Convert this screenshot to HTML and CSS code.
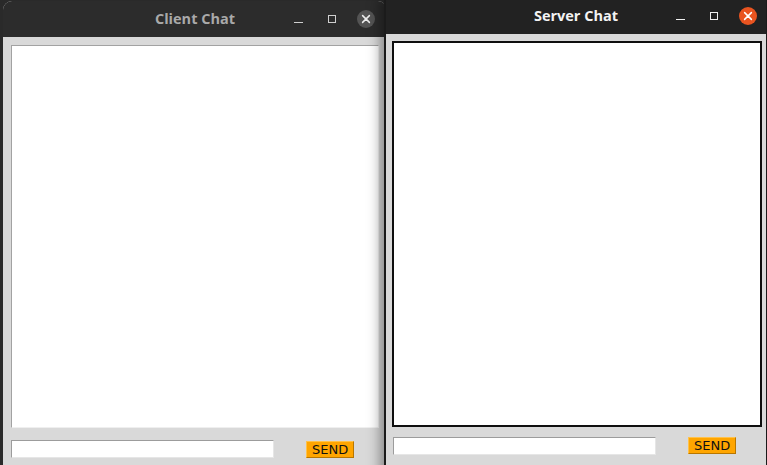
FILE: index.html
```html
<!DOCTYPE html>
<html>
<head>
<meta charset="utf-8">
<title>Chat</title>
<link rel="stylesheet" href="styles.css">
</head>
<body>
<div class="desktop">
  <section class="win win-client">
    <header class="titlebar">
      <span class="spacer"></span>
      <h1 class="title">Client Chat</h1>
      <div class="controls">
        <span class="ctl"><span class="min"></span></span>
        <span class="ctl"><span class="max"></span></span>
        <span class="ctl">
          <svg class="close" width="18" height="18" viewBox="0 0 18 18">
            <circle cx="9" cy="9" r="9" class="close-bg"/>
            <path d="M5.6 5.6 L12.4 12.4 M12.4 5.6 L5.6 12.4" class="close-x"/>
          </svg>
        </span>
      </div>
    </header>
    <div class="body">
      <div class="log log-plain"></div>
      <div class="entry-row">
        <input class="entry" type="text">
        <button class="send">SEND</button>
      </div>
    </div>
  </section>

  <section class="win win-server">
    <header class="titlebar">
      <span class="spacer"></span>
      <h1 class="title">Server Chat</h1>
      <div class="controls">
        <span class="ctl"><span class="min"></span></span>
        <span class="ctl"><span class="max"></span></span>
        <span class="ctl">
          <svg class="close" width="18" height="18" viewBox="0 0 18 18">
            <circle cx="9" cy="9" r="9" class="close-bg"/>
            <path d="M5.6 5.6 L12.4 12.4 M12.4 5.6 L5.6 12.4" class="close-x"/>
          </svg>
        </span>
      </div>
    </header>
    <div class="body">
      <div class="log log-focus"></div>
      <div class="entry-row">
        <input class="entry" type="text">
        <button class="send">SEND</button>
      </div>
    </div>
  </section>
</div>
</body>
</html>
```

FILE: styles.css
```css
html, body {
  margin: 0;
  padding: 0;
  height: 100%;
}

body {
  background: #2a2a2a;
  overflow: hidden;
  font-family: "DejaVu Sans", sans-serif;
}

.desktop {
  position: relative;
  width: 767px;
  height: 465px;
  overflow: hidden;
}

.win {
  position: absolute;
  box-sizing: border-box;
  display: flex;
  flex-direction: column;
  background: #d9d9d9;
  height: 480px;
}

.win-client {
  left: 3px;
  top: 1px;
  width: 384px;
  border-radius: 9px 9px 0 0;
  overflow: hidden;
  z-index: 1;
}

.win-server {
  left: 384px;
  top: -2px;
  width: 383px;
  border-left: 2px solid #1b1b1b;
  border-right: 1px solid #1b1b1b;
  box-shadow: -4px 0 12px rgba(0, 0, 0, 0.38);
  z-index: 2;
}

/* Title bar */
.titlebar {
  height: 36px;
  flex: none;
  display: grid;
  grid-template-columns: 1fr auto 1fr;
  align-items: center;
}

.win-client .titlebar {
  background: #2c2c2c;
}

.win-server .titlebar {
  background: #222222;
}

.title {
  margin: 0;
  font-family: "Open Sans", "DejaVu Sans", sans-serif;
  font-weight: 700;
  font-size: 14.5px;
  line-height: 36px;
  white-space: nowrap;
}

.win-client .title {
  color: #a9a9a9;
}

.win-server .title {
  color: #f3f3f3;
}

.controls {
  justify-self: end;
  display: flex;
  align-items: center;
  height: 36px;
}

.win-client .controls {
  padding-right: 4px;
}

.win-server .controls {
  padding-right: 1px;
}

.ctl {
  width: 34px;
  height: 36px;
  display: flex;
  align-items: center;
  justify-content: center;
}

.min {
  display: block;
  width: 9px;
  height: 1px;
  margin-top: 6px;
}

.max {
  display: block;
  box-sizing: border-box;
  width: 8px;
  height: 8px;
  border: 1px solid;
}

.win-client .min { background: #cfcfcf; }
.win-client .max { border-color: #cfcfcf; }
.win-server .min { background: #f0f0f0; }
.win-server .max { border-color: #f0f0f0; }

.close-x {
  fill: none;
  stroke-width: 1.5;
  stroke-linecap: round;
}

.win-client .close-bg { fill: #545454; }
.win-client .close-x { stroke: #ededed; }
.win-server .close-bg { fill: #e95420; }
.win-server .close-x { stroke: #ffffff; }

/* Body */
.body {
  flex: 1;
  display: flex;
  flex-direction: column;
}

.win-client .body {
  padding: 8px 8px 0 8px;
}

.win-server .body {
  padding: 7px 4px 0 6px;
}

.log {
  box-sizing: border-box;
  background: #ffffff;
  flex: none;
}

.log-plain {
  width: 368px;
  height: 383px;
  border: 1px solid;
  border-color: #a2a2a2 #efefef #efefef #a2a2a2;
}

.log-focus {
  width: 370px;
  height: 386px;
  border: 2px solid #0e0e0e;
}

.entry-row {
  display: flex;
  align-items: flex-start;
  gap: 32px;
}

.win-client .entry-row {
  margin-top: 12px;
}

.win-server .entry-row {
  margin-top: 10px;
  padding-left: 1px;
}

.entry {
  box-sizing: border-box;
  width: 263px;
  height: 18px;
  margin: 0;
  padding: 0;
  background: #ffffff;
  border: 1px solid;
  border-color: #9c9c9c #e6e6e6 #e6e6e6 #9c9c9c;
  outline: none;
}

.send {
  box-sizing: border-box;
  height: 17px;
  margin: 0;
  padding: 0 5px;
  background: #ffa500;
  border: 1px solid;
  border-color: #ffc24a #b87600 #b87600 #ffc24a;
  color: #111111;
  font-family: "DejaVu Sans", sans-serif;
  font-size: 13px;
  line-height: 15px;
}

.win-client .send {
  margin-top: 1px;
}
```
